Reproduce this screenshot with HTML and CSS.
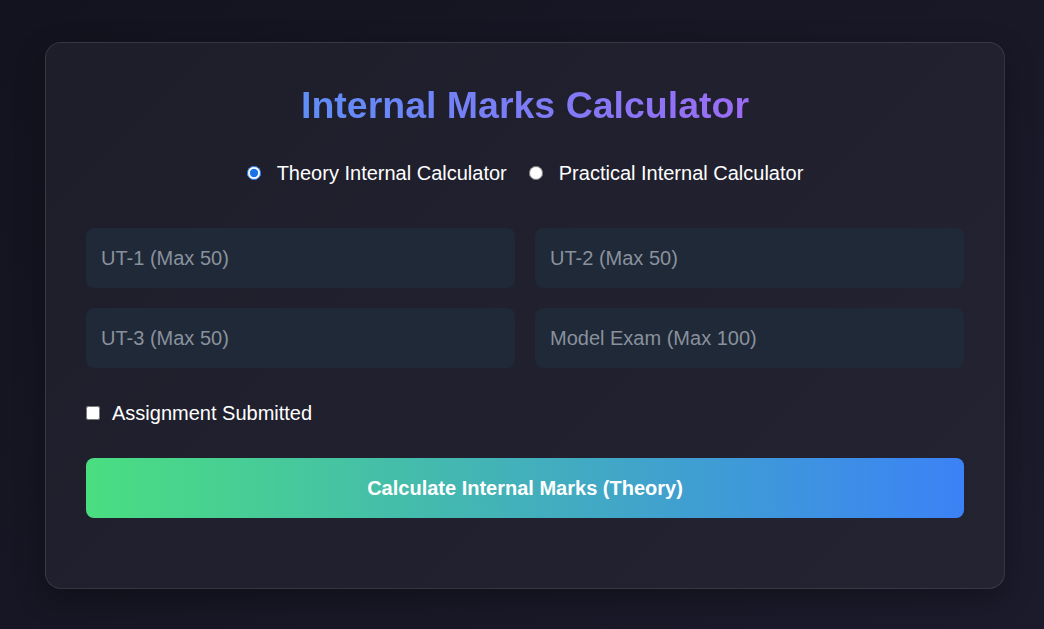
FILE: index.html
```html
<!DOCTYPE html>
<html lang="en">
<head>
<meta charset="utf-8">
<title>Internal Marks Calculator</title>
<link rel="stylesheet" href="styles.css">
</head>
<body>
<div class="card">
  <h1 class="title">Internal Marks Calculator</h1>
  <div class="modes">
    <label class="mode"><input type="radio" name="mode" checked> Theory Internal Calculator</label>
    <label class="mode"><input type="radio" name="mode"> Practical Internal Calculator</label>
  </div>
  <div class="grid">
    <input class="field" type="text" placeholder="UT-1 (Max 50)">
    <input class="field" type="text" placeholder="UT-2 (Max 50)">
    <input class="field" type="text" placeholder="UT-3 (Max 50)">
    <input class="field" type="text" placeholder="Model Exam (Max 100)">
  </div>
  <label class="check"><input type="checkbox"> Assignment Submitted</label>
  <button class="calc">Calculate Internal Marks (Theory)</button>
  <div class="result"></div>
</div>
</body>
</html>
```

FILE: styles.css
```css
html, body {
  margin: 0;
  height: 100%;
}
body {
  background: linear-gradient(135deg, #13131f 0%, #181827 60%, #1c1b2c 100%);
  font-family: "Liberation Sans", Arial, sans-serif;
  color: #fff;
  padding: 42px 0 0 45px;
  box-sizing: border-box;
}
.card {
  width: 960px;
  box-sizing: border-box;
  padding: 40px 40px 40px;
  background: linear-gradient(135deg, #1e1d2a 0%, #242332 100%);
  border: 1px solid rgba(255,255,255,0.1);
  border-radius: 16px;
  box-shadow: 0 10px 30px rgba(0,0,0,0.3);
}
.title {
  margin: 0 auto;
  text-align: center;
  font-size: 37.5px;
  font-weight: bold;
  line-height: 44px;
  background: linear-gradient(90deg, #5f8ef7, #7c7cf6 50%, #9c6cf5);
  -webkit-background-clip: text;
  background-clip: text;
  color: transparent;
  width: fit-content;
}
.modes {
  display: flex;
  justify-content: center;
  gap: 22px;
  margin-top: 34px;
}
.mode {
  display: flex;
  align-items: center;
  font-size: 20px;
  line-height: 24px;
}
.mode input {
  margin: 0 16px 0 0;
  width: 14px;
  height: 14px;
  accent-color: #1a73e8;
}
.grid {
  display: grid;
  grid-template-columns: 1fr 1fr;
  gap: 20px;
  margin-top: 43px;
}
.field {
  height: 60px;
  box-sizing: border-box;
  background: #1f2937;
  border: none;
  border-radius: 8px;
  padding: 0 15px;
  font-family: inherit;
  font-size: 20px;
  color: #fff;
  outline: none;
}
.field::placeholder {
  color: #8a919d;
}
.check {
  display: flex;
  align-items: center;
  margin-top: 33px;
  font-size: 20px;
  line-height: 24px;
}
.check input {
  margin: 0 12px 0 0;
  width: 14px;
  height: 14px;
}
.calc {
  display: block;
  width: 100%;
  height: 60px;
  margin-top: 33px;
  border: none;
  border-radius: 8px;
  background: linear-gradient(90deg, #4ade80, #3b82f6);
  color: #fff;
  font-family: inherit;
  font-size: 20px;
  font-weight: bold;
}
.result {
  height: 30px;
}
```
